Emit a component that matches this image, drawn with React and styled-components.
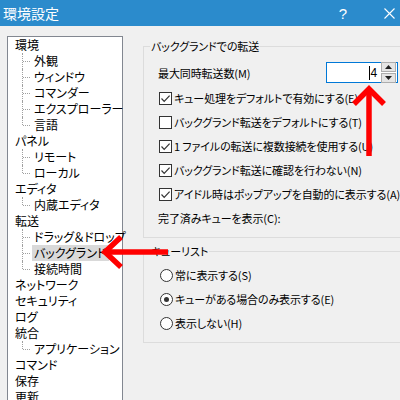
import styled, { createGlobalStyle, css } from "styled-components";

const GlobalStyle = createGlobalStyle`
  html, body {
    margin: 0;
    padding: 0;
    width: 400px;
    height: 400px;
    overflow: hidden;
    background: #f0f0f0;
  }
  body {
    font-family: "Noto Sans CJK JP", "Noto Sans", sans-serif;
    font-size: 12px;
    color: #000;
  }
`;

const tree = [
  { label: "環境", level: 0 },
  { label: "外観", level: 1 },
  { label: "ウィンドウ", level: 1 },
  { label: "コマンダー", level: 1 },
  { label: "エクスプローラー", level: 1 },
  { label: "言語", level: 1, last: true },
  { label: "パネル", level: 0 },
  { label: "リモート", level: 1 },
  { label: "ローカル", level: 1, last: true },
  { label: "エディタ", level: 0 },
  { label: "内蔵エディタ", level: 1, last: true },
  { label: "転送", level: 0 },
  { label: "ドラッグ＆ドロップ", level: 1 },
  { label: "バックグランド", level: 1, selected: true },
  { label: "接続時間", level: 1, last: true },
  { label: "ネットワーク", level: 0 },
  { label: "セキュリティ", level: 0 },
  { label: "ログ", level: 0 },
  { label: "統合", level: 0 },
  { label: "アプリケーション", level: 1, last: true },
  { label: "コマンド", level: 0 },
  { label: "保存", level: 0 },
  { label: "更新", level: 0 },
];

const checks = [
  { label: "キュー処理をデフォルトで有効にする", key: "E", checked: true },
  { label: "バックグランド転送をデフォルトにする", key: "T", checked: false },
  { label: "1 ファイルの転送に複数接続を使用する", key: "U", checked: true },
  { label: "バックグランド転送に確認を行わない", key: "N", checked: true },
  { label: "アイドル時はポップアップを自動的に表示する", key: "A", checked: true },
];

const radios = [
  { label: "常に表示する", key: "S", on: false },
  { label: "キューがある場合のみ表示する", key: "E", on: true },
  { label: "表示しない", key: "H", on: false },
];

const App = () => {
  return (
    <Window>
      <GlobalStyle />
      <TitleBar>
        <Title>環境設定</Title>
        <TitleButtons>
          <Help>?</Help>
          <svg width="11" height="11" viewBox="0 0 11 11">
            <path d="M0.5 0.5 L10.5 10.5 M10.5 0.5 L0.5 10.5" stroke="#fff" strokeWidth="1.1" />
          </svg>
        </TitleButtons>
      </TitleBar>

      <Body>
        <TreePanel>
          {tree.map((item, i) => (
            <TreeRow key={i} $level={item.level} $last={item.last}>
              <TreeLabel $selected={item.selected}>{item.label}</TreeLabel>
            </TreeRow>
          ))}
        </TreePanel>

        <Settings>
          <GroupBox>
            <Legend>バックグランドでの転送</Legend>
            <SpinRow>
              <span>最大同時転送数(M)</span>
              <SpinBox>
                <SpinValue>
                  <Caret />4
                </SpinValue>
                <SpinButtons>
                  <SpinButton>
                    <svg width="7" height="4" viewBox="0 0 7 4">
                      <path d="M0 4 L3.5 0 L7 4 Z" fill="#222" />
                    </svg>
                  </SpinButton>
                  <SpinButton>
                    <svg width="7" height="4" viewBox="0 0 7 4">
                      <path d="M0 0 L3.5 4 L7 0 Z" fill="#222" />
                    </svg>
                  </SpinButton>
                </SpinButtons>
              </SpinBox>
            </SpinRow>

            {checks.map((c) => (
              <OptionRow key={c.label}>
                <CheckBox>
                  {c.checked && (
                    <svg width="11" height="11" viewBox="0 0 11 11">
                      <path d="M1.5 5.5 L4.2 8.3 L9.6 2.6" fill="none" stroke="#333" strokeWidth="1.2" />
                    </svg>
                  )}
                </CheckBox>
                <span>
                  {c.label}({c.key})
                </span>
              </OptionRow>
            ))}
            <PlainRow>完了済みキューを表示(C):</PlainRow>
          </GroupBox>

          <GroupBox $second>
            <Legend>キューリスト</Legend>
            {radios.map((r) => (
              <RadioRow key={r.label}>
                <Radio $on={r.on} />
                <span>
                  {r.label}({r.key})
                </span>
              </RadioRow>
            ))}
          </GroupBox>
        </Settings>
      </Body>

      <Arrows width="400" height="400" viewBox="0 0 400 400">
        <g fill="none" stroke="#ff0000" strokeWidth="5.5" strokeLinejoin="miter">
          <path d="M369 90 L369 156" />
          <path d="M354 104 L369 89 L384 104" />
          <path d="M105 252 L168 252" />
          <path d="M121 237 L105 252 L121 267" />
        </g>
      </Arrows>
    </Window>
  );
};

export default App;

const Window = styled.div`
  position: relative;
  width: 400px;
  height: 400px;
  overflow: hidden;
  background: #f0f0f0;
`;

const TitleBar = styled.div`
  height: 26px;
  background: #2b8bcc;
  display: flex;
  align-items: center;
  justify-content: space-between;
  padding: 0 5px 0 3px;
  color: #fff;
`;

const Title = styled.div`
  font-size: 14px;
  line-height: 26px;
  font-feature-settings: "palt";
`;

const TitleButtons = styled.div`
  display: flex;
  align-items: center;
  gap: 37px;
`;

const Help = styled.span`
  font-family: "Liberation Sans", sans-serif;
  font-size: 15px;
`;

const Body = styled.div`
  display: flex;
  align-items: flex-start;
  padding: 10px 0 0 7px;
`;

const TreePanel = styled.div`
  width: 114px;
  height: 380px;
  flex: none;
  background: #fff;
  border: 1px solid #828790;
`;

const TreeRow = styled.div`
  position: relative;
  height: 16px;
  display: flex;
  align-items: center;
  padding-left: ${(p) => (p.$level ? 24 : 5)}px;
  ${(p) =>
    p.$level &&
    css`
      &::before {
        content: "";
        position: absolute;
        left: 14px;
        top: 0;
        height: ${p.$last ? 8 : 16}px;
        border-left: 1px dotted #a0a0a0;
      }
      &::after {
        content: "";
        position: absolute;
        left: 15px;
        top: 8px;
        width: 7px;
        border-top: 1px dotted #a0a0a0;
      }
    `}
`;

const TreeLabel = styled.span`
  font-feature-settings: "palt";
  line-height: 16px;
  padding: 0 2px;
  white-space: nowrap;
  background: ${(p) => (p.$selected ? "#d9d9d9" : "transparent")};
`;

const Settings = styled.div`
  display: flex;
  flex-direction: column;
  margin-left: 20px;
  width: 280px;
  flex: none;
  font-size: 11px;
  letter-spacing: -0.1px;
`;

const GroupBox = styled.div`
  position: relative;
  border: 1px solid #dcdcdc;
  border-right: none;
  margin-top: ${(p) => (p.$second ? 13 : 10)}px;
  padding: ${(p) => (p.$second ? "11px 0 7px 15px" : "15px 0 7px 14px")};
  font-feature-settings: "palt";
`;

const Legend = styled.div`
  position: absolute;
  top: -9px;
  left: 6px;
  padding: 0 1px;
  line-height: 16px;
  background: #f0f0f0;
`;

const SpinRow = styled.div`
  display: flex;
  align-items: center;
  justify-content: space-between;
  height: 21px;
  margin-bottom: 3px;
  width: 240px;
`;

const SpinBox = styled.div`
  width: 70px;
  height: 19px;
  border: 1px solid #0078d7;
  background: #fff;
  display: flex;
  align-items: center;
  justify-content: flex-end;
`;

const SpinValue = styled.div`
  display: flex;
  align-items: center;
  font-family: "Liberation Sans", sans-serif;
  font-size: 12px;
  margin-right: 4px;
`;

const Caret = styled.span`
  display: inline-block;
  width: 1px;
  height: 14px;
  background: #000;
`;

const SpinButtons = styled.div`
  display: flex;
  flex-direction: column;
  gap: 1px;
  margin-right: 1px;
`;

const SpinButton = styled.div`
  width: 13px;
  height: 8px;
  background: #e5e5e5;
  border: 1px solid #adadad;
  display: flex;
  align-items: center;
  justify-content: center;
`;

const OptionRow = styled.div`
  display: flex;
  align-items: center;
  height: 24px;
  gap: 2px;
  padding-left: 1px;
  white-space: nowrap;
`;

const CheckBox = styled.div`
  width: 11px;
  height: 11px;
  border: 1px solid #333;
  background: #fff;
  display: flex;
  align-items: center;
  justify-content: center;
`;

const PlainRow = styled.div`
  height: 24px;
  display: flex;
  align-items: center;
`;

const RadioRow = styled.div`
  display: flex;
  align-items: center;
  height: 24px;
  gap: 2px;
  padding-left: 1px;
  white-space: nowrap;
`;

const Radio = styled.div`
  width: 11px;
  height: 11px;
  border: 1px solid #333;
  border-radius: 50%;
  background: #fff;
  display: flex;
  align-items: center;
  justify-content: center;

  &::after {
    content: "";
    width: 5px;
    height: 5px;
    border-radius: 50%;
    background: ${(p) => (p.$on ? "#333" : "transparent")};
  }
`;

const Arrows = styled.svg`
  position: absolute;
  left: 0;
  top: 0;
  pointer-events: none;
`;
